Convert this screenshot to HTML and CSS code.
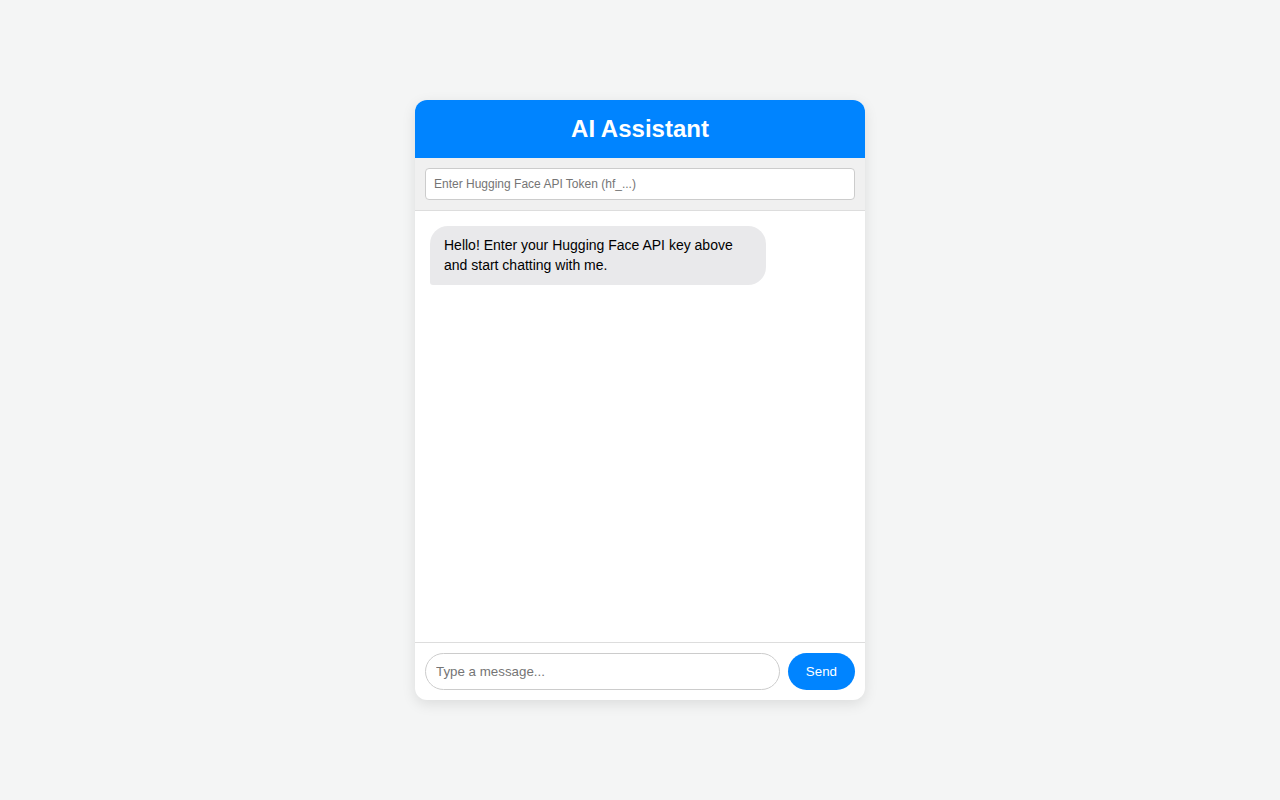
FILE: index.html
```html
<!DOCTYPE html>
<html lang="en">
<head>
<meta charset="UTF-8">
<title>AI Assistant</title>
<link rel="stylesheet" href="styles.css">
</head>
<body>
<div class="chat">
  <header class="chat-header">AI Assistant</header>
  <div class="token-bar">
    <input class="token-input" type="password" placeholder="Enter Hugging Face API Token (hf_...)">
  </div>
  <main class="messages">
    <div class="msg bot">Hello! Enter your Hugging Face API key above and start chatting with me.</div>
  </main>
  <footer class="composer">
    <input class="msg-input" type="text" placeholder="Type a message...">
    <button class="send-btn">Send</button>
  </footer>
</div>
</body>
</html>
```
FILE: styles.css
```css
* { box-sizing: border-box; }
html, body { height: 100%; }
body {
  margin: 0;
  background: #f4f5f5;
  font-family: "Liberation Sans", Arial, sans-serif;
  display: flex;
  align-items: center;
  justify-content: center;
}
.chat {
  width: 450px;
  height: 600px;
  background: #fff;
  border-radius: 12px;
  box-shadow: 0 4px 14px rgba(0,0,0,0.1);
  display: flex;
  flex-direction: column;
  overflow: hidden;
}
.chat-header {
  background: #0084ff;
  color: #fff;
  text-align: center;
  font-weight: bold;
  font-size: 24px;
  padding: 15px;
  line-height: 28px;
}
.token-bar {
  background: #f0f0f0;
  padding: 10px;
  border-bottom: 1px solid #ddd;
}
.token-input {
  width: 100%;
  display: block;
  padding: 8px;
  font-size: 12px;
  line-height: 14px;
  border: 1px solid #ccc;
  border-radius: 4px;
  font-family: inherit;
  background: #fff;
}
.token-input::placeholder { color: #757575; }
.messages {
  flex: 1;
  padding: 15px;
  overflow-y: auto;
  display: flex;
  flex-direction: column;
}
.msg {
  max-width: 80%;
  padding: 10px 14px;
  font-size: 14px;
  line-height: 1.4;
  border-radius: 18px;
}
.msg.bot {
  align-self: flex-start;
  background: #e9e9eb;
  color: #000;
  border-bottom-left-radius: 3px;
}
.composer {
  display: flex;
  gap: 8px;
  padding: 10px;
  border-top: 1px solid #ddd;
}
.msg-input {
  flex: 1;
  padding: 10px;
  font-size: 13.333px;
  line-height: 15px;
  border: 1px solid #ccc;
  border-radius: 20px;
  font-family: inherit;
  outline: none;
}
.msg-input::placeholder { color: #757575; }
.send-btn {
  background: #0084ff;
  color: #fff;
  border: none;
  border-radius: 20px;
  padding: 10px 18px;
  font-size: 13.333px;
  font-family: inherit;
  cursor: pointer;
}
```
